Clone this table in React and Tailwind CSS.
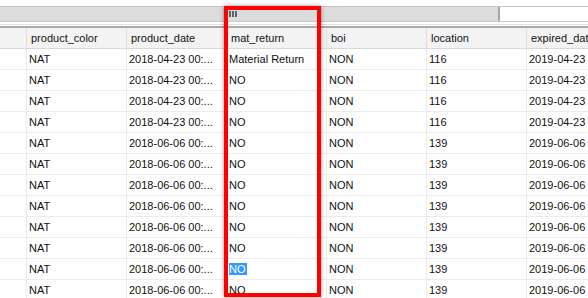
import React from "react";

const cols = ["", "product_color", "product_date", "mat_return", "boi", "location", "expired_date"];

const rows = [
  ["NAT", "2018-04-23 00:...", "Material Return", "NON", "116", "2019-04-23"],
  ["NAT", "2018-04-23 00:...", "NO", "NON", "116", "2019-04-23"],
  ["NAT", "2018-04-23 00:...", "NO", "NON", "116", "2019-04-23"],
  ["NAT", "2018-04-23 00:...", "NO", "NON", "116", "2019-04-23"],
  ["NAT", "2018-06-06 00:...", "NO", "NON", "139", "2019-06-06"],
  ["NAT", "2018-06-06 00:...", "NO", "NON", "139", "2019-06-06"],
  ["NAT", "2018-06-06 00:...", "NO", "NON", "139", "2019-06-06"],
  ["NAT", "2018-06-06 00:...", "NO", "NON", "139", "2019-06-06"],
  ["NAT", "2018-06-06 00:...", "NO", "NON", "139", "2019-06-06"],
  ["NAT", "2018-06-06 00:...", "NO", "NON", "139", "2019-06-06"],
  ["NAT", "2018-06-06 00:...", "NO", "NON", "139", "2019-06-06", true],
  ["NAT", "2018-06-06 00:...", "NO", "NON", "139", "2019-06-06"],
];

export default function App() {
  return (
    <div className="relative w-[588px] h-[298px] overflow-hidden bg-white text-[11px] text-[#111] font-['Liberation_Sans',Arial,sans-serif]">
      {/* scrollbar strip */}
      <div className="h-[6px]" />
      <div className="flex h-[16px] border-y border-[#c6c6c6]">
        <div className="w-[500px] bg-[#dcdcdc] border-r-2 border-[#a8a8a8] flex items-center">
          <div className="ml-[229px] flex gap-[1px]">
            <div className="w-[2px] h-[6px] bg-[#606060]" />
            <div className="w-[2px] h-[6px] bg-[#606060]" />
            <div className="w-[2px] h-[6px] bg-[#606060]" />
          </div>
        </div>
        <div className="flex-1 bg-white" />
      </div>
      <div className="h-[2px]" />
      <div className="h-[1px] bg-[#e0e0e0]" />
      <div className="h-[1px]" />
      <div className="h-[2px] bg-[#a9a9a9]" />

      {/* grid */}
      <div className="w-[627px]">
        <div className="grid grid-cols-[27px_100px_100px_100px_100px_100px_100px] h-[21px] bg-[#f3f3f3] border-b border-[#d8d8d8]">
          {cols.map((c, i) => (
            <div key={i} className="border-r border-[#dedede] pl-[4px] leading-[21px] whitespace-nowrap overflow-hidden">
              {c}
            </div>
          ))}
        </div>
        {rows.map((r, i) => (
          <div key={i} className="grid grid-cols-[27px_100px_100px_100px_100px_100px_100px] h-[21px] border-b border-[#ececec]">
            <div className="border-r border-[#ececec]" />
            {r.slice(0, 6).map((v, j) => (
              <div key={j} className="border-r border-[#ececec] pl-[2px] leading-[20px] whitespace-nowrap overflow-hidden">
                {j === 2 && r[6] ? (
                  <span className="bg-[#3399ff] text-white pr-[1px]">{v}</span>
                ) : (
                  v
                )}
              </div>
            ))}
          </div>
        ))}
      </div>

      {/* highlight box */}
      <div className="absolute left-[224px] top-[6px] w-[97px] h-[291px] border-4 border-[#ff0000] shadow-[0_0_4px_rgba(0,0,0,0.45)]" />
    </div>
  );
}
